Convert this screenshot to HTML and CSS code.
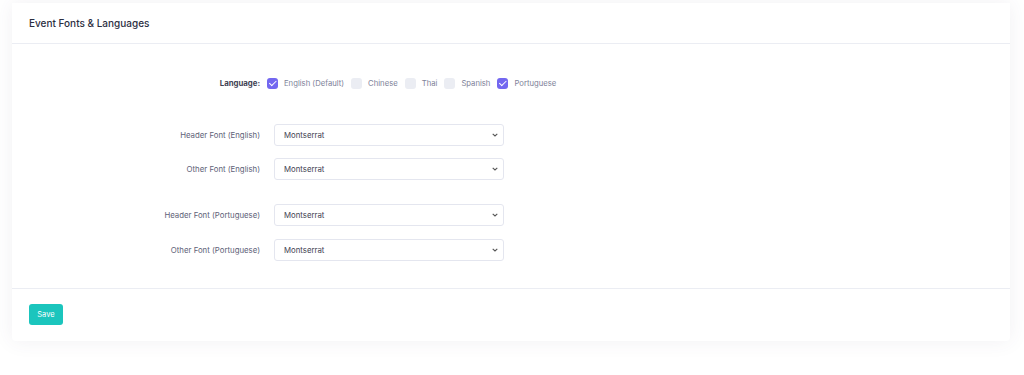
FILE: index.html
```html
<!DOCTYPE html>
<html lang="en">
<head>
  <meta charset="UTF-8" />
  <title>Event Fonts &amp; Languages</title>
  <link rel="stylesheet" href="styles.css">
</head>
<body>
  <div class="card">
    <div class="card-header">
      <h3>Event Fonts &amp; Languages</h3>
    </div>

    <div class="card-body">
      <!-- languages -->
      <div class="form-row lang-row">
        <label class="row-label strong">Language:</label>
        <div class="checks">
          <label class="check"><input type="checkbox" checked><span class="box"></span>English (Default)</label>
          <label class="check"><input type="checkbox"><span class="box"></span>Chinese</label>
          <label class="check"><input type="checkbox"><span class="box"></span>Thai</label>
          <label class="check"><input type="checkbox"><span class="box"></span>Spanish</label>
          <label class="check"><input type="checkbox" checked><span class="box"></span>Portuguese</label>
        </div>
      </div>

      <div class="font-group">
        <div class="form-row">
          <label class="row-label">Header Font (English)</label>
          <select class="font-select"><option>Montserrat</option></select>
        </div>
        <div class="form-row">
          <label class="row-label">Other Font (English)</label>
          <select class="font-select"><option>Montserrat</option></select>
        </div>
      </div>

      <div class="font-group">
        <div class="form-row">
          <label class="row-label">Header Font (Portuguese)</label>
          <select class="font-select"><option>Montserrat</option></select>
        </div>
        <div class="form-row">
          <label class="row-label">Other Font (Portuguese)</label>
          <select class="font-select"><option>Montserrat</option></select>
        </div>
      </div>
    </div>

    <div class="card-footer">
      <button class="btn-save">Save</button>
    </div>
  </div>
</body>
</html>
```

FILE: styles.css
```css
body {
  margin: 0;
  padding: 3px 14px 30px 12px;
  background: #fff;
  font-family: Inter, "Open Sans", sans-serif;
  color: #3f4254;
}
.card {
  background: #fff;
  box-shadow: 0 0 20px 0 rgba(82, 63, 105, 0.08);
  border-radius: 0 0 4px 4px;
}
.card-header {
  height: 40px;
  display: flex;
  align-items: center;
  padding: 0 17px;
  border-bottom: 1px solid #ebedf3;
}
.card-header h3 {
  margin: 0;
  font-size: 10px;
  font-weight: 500;
  color: #2b2e3f;
}
.card-body {
  padding: 33px 0 27px;
  border-bottom: 1px solid #ebedf3;
}
.form-row {
  display: flex;
  align-items: center;
  gap: 14px;
  margin-bottom: 12px;
}
.row-label {
  width: 248px;
  text-align: right;
  font-size: 7.8px;
  color: #5e6278;
  flex-shrink: 0;
}
.row-label.strong {
  font-weight: 700;
  color: #3f4254;
  margin-right: -7px;
}
.lang-row {
  height: 12px;
  margin-bottom: 35px;
}
.checks {
  display: flex;
  gap: 7px;
}
.check {
  display: flex;
  align-items: center;
  gap: 6px;
  font-size: 7.7px;
  color: #7e8299;
}
.check input {
  display: none;
}
.check .box {
  width: 11px;
  height: 11px;
  border-radius: 3px;
  background: #ebedf3;
  position: relative;
}
.check input:checked + .box {
  background: #7367f0;
}
.check input:checked + .box::after {
  content: "";
  position: absolute;
  left: 3.5px;
  top: 1.5px;
  width: 3px;
  height: 5.5px;
  border: solid #fff;
  border-width: 0 1.3px 1.3px 0;
  transform: rotate(45deg);
}
.font-group {
  margin-bottom: 24px;
}
.font-group .form-row:last-child {
  margin-bottom: 0;
}
.font-group:last-child {
  margin-bottom: 0;
}
.font-group:last-child .form-row:first-child {
  margin-bottom: 13px;
}
.font-select {
  appearance: none;
  -webkit-appearance: none;
  width: 230px;
  height: 22px;
  padding: 0 6px 0 9px;
  font-family: inherit;
  font-size: 7.8px;
  color: #3f4254;
  background: #fff url("data:image/svg+xml,%3Csvg xmlns='http://www.w3.org/2000/svg' width='6' height='4' viewBox='0 0 6 4'%3E%3Cpath d='M0.7 0.8 L3 3 L5.3 0.8' fill='none' stroke='%23555' stroke-width='1.1'/%3E%3C/svg%3E") no-repeat right 5px center;
  border: 1px solid #e4e6ef;
  border-radius: 3px;
}
.card-footer {
  display: flex;
  padding: 15px 17px 16px;
}
.btn-save {
  width: 34px;
  height: 21px;
  padding: 0;
  border: none;
  border-radius: 3px;
  background: #1bc5bd;
  color: #fff;
  font-family: inherit;
  font-size: 7.5px;
  cursor: pointer;
}
```
